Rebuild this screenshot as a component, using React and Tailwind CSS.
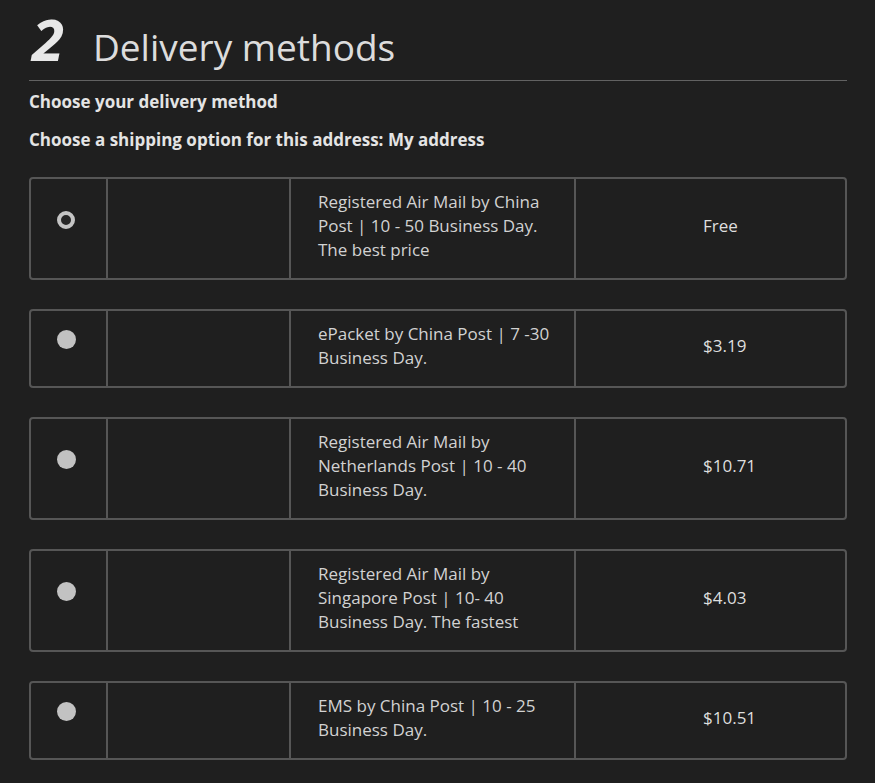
import React from "react";

const options = [
  {
    id: "china-post",
    name: "Registered Air Mail by China Post | 10 - 50 Business Day. The best price",
    price: "Free",
  },
  { id: "epacket", name: "ePacket by China Post | 7 -30 Business Day.", price: "$3.19" },
  {
    id: "netherlands",
    name: "Registered Air Mail by Netherlands Post | 10 - 40 Business Day.",
    price: "$10.71",
  },
  {
    id: "singapore",
    name: "Registered Air Mail by Singapore Post | 10- 40 Business Day. The fastest",
    price: "$4.03",
  },
  { id: "ems", name: "EMS by China Post | 10 - 25 Business Day.", price: "$10.51" },
];

function Radio({ checked }) {
  return checked ? (
    <span className="block w-[18px] h-[18px] rounded-full border-[4px] border-[#c4c4c4] bg-[#262626]" />
  ) : (
    <span className="block w-[19px] h-[19px] rounded-full bg-[#c2c2c2]" />
  );
}

export default function App() {
  const selected = "china-post";

  return (
    <div
      className="min-h-screen bg-[#1f1f1f] pl-[29px] pr-[28px] pt-[10px] pb-[22px]"
      style={{ fontFamily: '"Open Sans", "Liberation Sans", sans-serif' }}
    >
      <div className="flex items-baseline h-[56px]">
        <span className="text-[58px] leading-none font-bold italic text-[#e8e8e8] pl-[3px]">2</span>
        <span className="ml-[29px] text-[37px] leading-none text-[#dcdcdc]">Delivery methods</span>
      </div>
      <div className="mt-[14px] h-px bg-[#626262]" />

      <p className="mt-[9px] text-[17px] leading-[24px] font-bold text-[#e4e4e4]">
        Choose your delivery method
      </p>
      <p className="mt-[14px] text-[17px] leading-[24px] font-bold text-[#e4e4e4]">
        Choose a shipping option for this address: My address
      </p>

      <div className="mt-[25px] flex flex-col gap-[29px]">
        {options.map((o) => (
          <div
            key={o.id}
            className="flex border-2 border-[#565656] rounded-[4px] text-[17px] leading-[24px]"
          >
            <div className="w-[75px] shrink-0 flex items-center pl-[26px]">
              <span className="mb-[18px]">
                <Radio checked={o.id === selected} />
              </span>
            </div>
            <div className="w-[183px] shrink-0 border-l-2 border-[#565656]" />
            <div className="w-[285px] shrink-0 border-l-2 border-[#565656] pl-[27px] pr-[12px] pt-[11px] pb-[16px] text-[#d2d2d2]">
              {o.name}
            </div>
            <div className="flex-1 border-l-2 border-[#565656] flex items-center pl-[127px] pb-[5px] text-[#dedede]">
              {o.price}
            </div>
          </div>
        ))}
      </div>
    </div>
  );
}
